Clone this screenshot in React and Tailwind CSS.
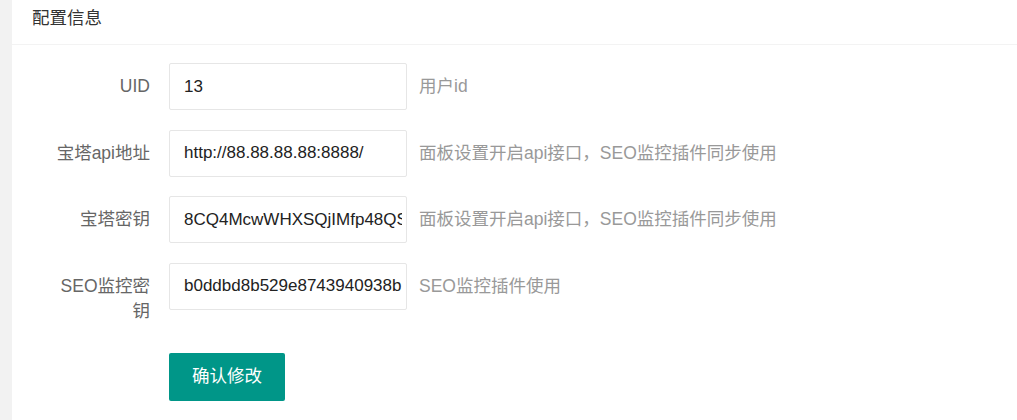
import { useState } from "react";

const rows = [
  { label: "UID", value: "13", tip: "用户id" },
  { label: "宝塔api地址", value: "http://88.88.88.88:8888/", tip: "面板设置开启api接口，SEO监控插件同步使用" },
  { label: "宝塔密钥", value: "8CQ4McwWHXSQjIMfp48QSrkZ2vEa", tip: "面板设置开启api接口，SEO监控插件同步使用" },
  { label: "SEO监控密钥", value: "b0ddbd8b529e8743940938b1c2f3", tip: "SEO监控插件使用" },
];

const App = () => {
  const [form, setForm] = useState(rows.map((r) => r.value));
  return (
    <div
      className="min-h-screen bg-[#f2f2f2] pl-[12px]"
      style={{ fontFamily: '"Liberation Sans", "Noto Sans CJK SC", sans-serif' }}
    >
      <div className="min-h-screen bg-white">
        <div className="pl-[20px] pt-[5px] pb-[13px] text-[17.5px] leading-[26px] text-[#333] border-b border-[#f3f3f3]">
          配置信息
        </div>
        <form className="pt-[18px]" onSubmit={(e) => e.preventDefault()}>
          {rows.map((r, i) => (
            <div key={r.label} className="flex items-start mb-[19.5px]">
              <label className="w-[138px] shrink-0 pl-[40px] pt-[11px] text-right text-[17.5px] leading-[25px] text-[#666]">
                {r.label}
              </label>
              <input
                className="ml-[19px] w-[238px] h-[47px] shrink-0 border border-[#e6e6e6] rounded-[2px] pl-[14px] pr-[4px] text-[17px] text-[#222] outline-none"
                value={form[i]}
                onChange={(e) => {
                  const next = [...form];
                  next[i] = e.target.value;
                  setForm(next);
                }}
              />
              <div className="ml-[12px] h-[47px] flex items-center text-[17.5px] text-[#999]">{r.tip}</div>
            </div>
          ))}
          <div className="pl-[157px] mt-[29px]">
            <button className="h-[48px] px-[23px] bg-[#009688] text-white text-[17.5px] rounded-[2px]">
              确认修改
            </button>
          </div>
        </form>
      </div>
    </div>
  );
};

export default App;
